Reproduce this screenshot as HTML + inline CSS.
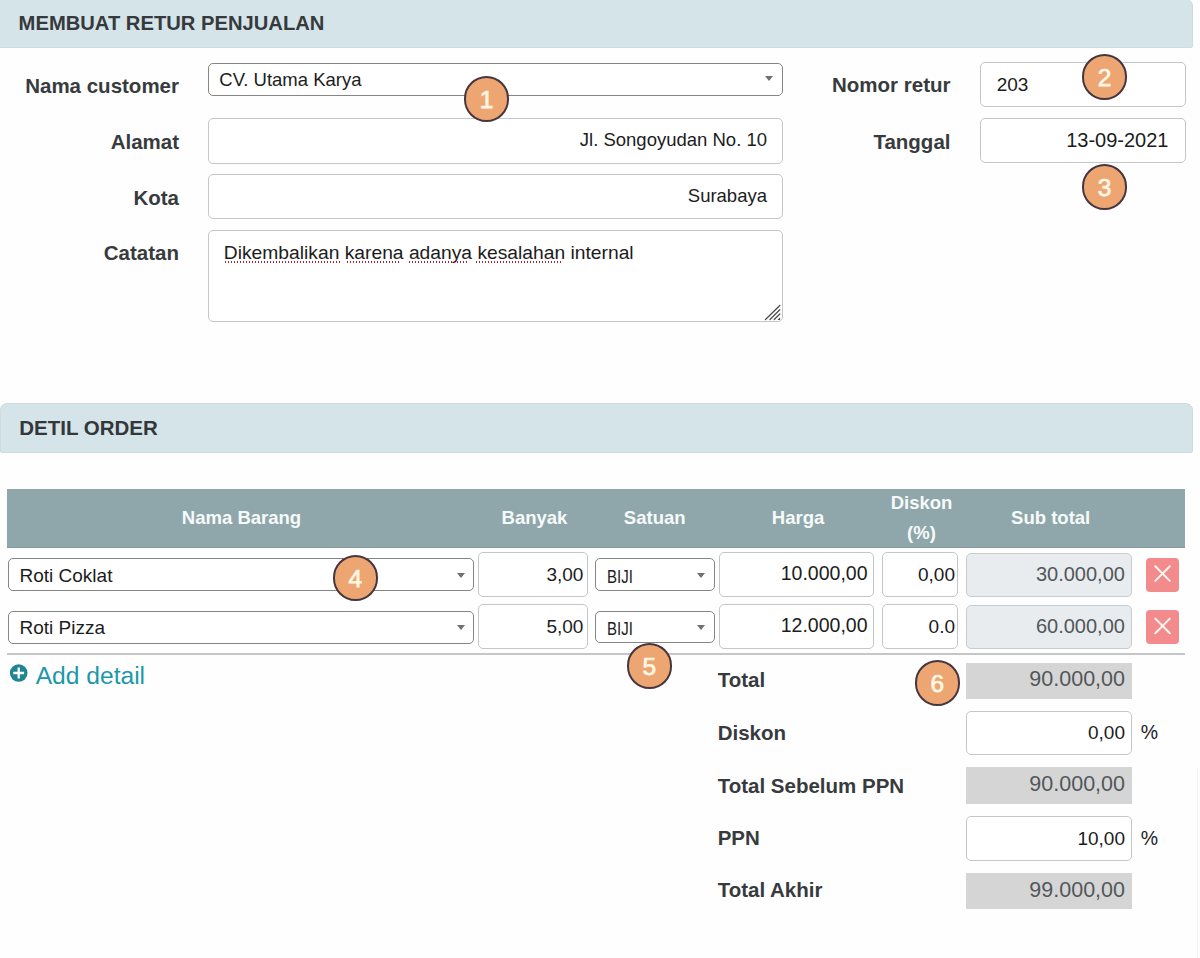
<!DOCTYPE html>
<html><head><meta charset="utf-8">
<style>
*{box-sizing:border-box;margin:0;padding:0}
html,body{width:1200px;height:958px;overflow:hidden;background:#fefefe;font-family:"Liberation Sans",sans-serif;color:#1c1c1c}
.a{position:absolute}
.t{position:absolute;white-space:nowrap;line-height:1}
.b{font-weight:bold}
.lb{position:absolute;white-space:nowrap;line-height:1;font-weight:bold;font-size:20.5px;color:#383b3d}
.inp{position:absolute;border:1px solid #c6c6c6;border-radius:5px;background:#fff}
.sel{position:absolute;border:1px solid #858585;border-radius:5px;background:#fff}
.ro{position:absolute;border:1px solid #c9cccf;border-radius:5px;background:#e9ecef}
.gr{position:absolute;background:#d5d5d5}
.arr{position:absolute;width:0;height:0;border-left:4.5px solid transparent;border-right:4.5px solid transparent;border-top:5.5px solid #707070}
.th{position:absolute;white-space:nowrap;line-height:1;font-weight:bold;font-size:18.5px;color:#f6fafa;text-align:center}
.v{position:absolute;white-space:nowrap;line-height:1;font-size:19px;color:#1c1c1c}
.vg{position:absolute;white-space:nowrap;line-height:1;font-size:20px;color:#51575a}
.xb{position:absolute;width:33px;height:33.5px;background:#f38a8b;border-radius:4px}
.badge{position:absolute;width:45.5px;height:45.5px;border-radius:50%;background:#eda671;border:2px solid #46363f}
.bn{position:absolute;white-space:nowrap;line-height:1;font-size:24.5px;font-weight:normal;-webkit-text-stroke:0.75px #fff6e4;color:#fff6e4;text-align:center;width:46px}
.sp{position:absolute;height:2px;background-image:radial-gradient(circle,#a8233a 0.9px,transparent 1.1px);background-size:3px 2px;background-repeat:repeat-x}
</style></head>
<body>
<!-- Section 1 header -->
<div class="a" style="left:-8px;top:-1px;width:1201px;height:48.7px;background:#d5e4e8;border:1px solid #cddbdf;border-radius:7px 7px 2px 2px"></div>
<div class="t b" style="left:18.6px;top:13px;font-size:20.2px;color:#363a3d">MEMBUAT RETUR PENJUALAN</div>

<!-- labels left -->
<div class="lb" style="right:1021px;top:75.6px">Nama customer</div>
<div class="lb" style="right:1021px;top:132px">Alamat</div>
<div class="lb" style="right:1021px;top:187.6px">Kota</div>
<div class="lb" style="right:1021px;top:243.4px">Catatan</div>
<div class="lb" style="right:249.5px;top:75.3px">Nomor retur</div>
<div class="lb" style="right:249.5px;top:131.8px">Tanggal</div>

<!-- inputs -->
<div class="sel" style="left:208px;top:63px;width:575px;height:33px;border-radius:5px"></div>
<div class="arr" style="left:765px;top:76px"></div>
<div class="t" style="left:219.3px;top:70.6px;font-size:18.5px">CV. Utama Karya</div>

<div class="inp" style="left:208px;top:118px;width:574.5px;height:45.5px"></div>
<div class="t" style="right:433px;top:131.3px;font-size:18.5px">Jl. Songoyudan No. 10</div>
<div class="inp" style="left:208px;top:174.3px;width:574.5px;height:44.7px"></div>
<div class="t" style="right:433px;top:187.3px;font-size:18.5px">Surabaya</div>
<div class="inp" style="left:208px;top:230px;width:574.5px;height:92px"></div>
<div class="t" style="left:223.8px;top:242.7px;font-size:19.25px">Dikembalikan karena adanya kesalahan internal</div>
<div class="sp" style="left:224px;top:261.3px;width:117px"></div>
<div class="sp" style="left:346px;top:261.3px;width:55px"></div>
<div class="sp" style="left:408px;top:261.3px;width:60px"></div>
<div class="sp" style="left:475px;top:261.3px;width:88px"></div>
<svg class="a" style="left:760px;top:300px" width="24" height="24" viewBox="0 0 24 24">
<g stroke="#4a4a4a" stroke-width="1.3" stroke-linecap="round">
<line x1="5.5" y1="19.5" x2="19.8" y2="5.5"/>
<line x1="10" y1="19.5" x2="19.8" y2="9.8"/>
<line x1="14.2" y1="19.5" x2="19.8" y2="14"/>
</g>
<path d="M17.4 19.9 L20.1 17.2 L20.1 19.9 Z" fill="#4a4a4a"/>
</svg>

<div class="inp" style="left:980px;top:62px;width:205.5px;height:44.5px"></div>
<div class="t" style="left:996.7px;top:74.7px;font-size:19px">203</div>
<div class="inp" style="left:980px;top:118.3px;width:205.5px;height:45px"></div>
<div class="t" style="right:31.5px;top:130.1px;font-size:20px">13-09-2021</div>

<!-- Section 2 header -->
<div class="a" style="left:0px;top:403.3px;width:1192.7px;height:50px;background:#d5e4e8;border:1px solid #cddbdf;border-radius:7px 7px 2px 2px"></div>
<div class="t b" style="left:19.2px;top:417.6px;font-size:20.5px;color:#33373a">DETIL ORDER</div>

<!-- table header -->
<div class="a" style="left:7px;top:488.8px;width:1178.4px;height:59px;background:#8fa7aa;border-bottom:1px solid #83999c"></div>
<div class="th" style="left:141.5px;top:508.8px;width:200px">Nama Barang</div>
<div class="th" style="left:434.5px;top:508.8px;width:200px">Banyak</div>
<div class="th" style="left:554.7px;top:508.8px;width:200px">Satuan</div>
<div class="th" style="left:698.1px;top:508.8px;width:200px">Harga</div>
<div class="th" style="left:821.5px;top:494.3px;width:200px">Diskon</div>
<div class="th" style="left:821.5px;top:523.6px;width:200px">(%)</div>
<div class="th" style="left:950.7px;top:509.3px;width:200px">Sub total</div>

<!-- row 1 -->
<div class="sel" style="left:8px;top:558px;width:466px;height:33px"></div>
<div class="arr" style="left:456.5px;top:572.5px"></div>
<div class="v" style="left:19.5px;top:566.4px">Roti Coklat</div>
<div class="inp" style="left:478.4px;top:552px;width:110px;height:45.3px"></div>
<div class="v" style="right:616.6px;top:564.6px">3,00</div>
<div class="sel" style="left:595px;top:558px;width:119.5px;height:33px"></div>
<div class="arr" style="left:697px;top:572.5px"></div>
<div class="v" style="left:607px;top:566.5px;transform:scaleX(0.79);transform-origin:0 0">BIJI</div>
<div class="inp" style="left:719.3px;top:552px;width:154.7px;height:45.3px"></div>
<div class="v" style="right:332.5px;top:564.3px;font-size:19.5px">10.000,00</div>
<div class="inp" style="left:882.3px;top:552px;width:76px;height:45.3px"></div>
<div class="v" style="right:245px;top:564.7px">0,00</div>
<div class="ro" style="left:965.5px;top:552.5px;width:166.7px;height:44.7px"></div>
<div class="vg" style="right:75.1px;top:563.9px">30.000,00</div>
<div class="xb" style="left:1145.7px;top:558px"></div>

<!-- row 2 -->
<div class="sel" style="left:8px;top:610.5px;width:466px;height:33px"></div>
<div class="arr" style="left:456.5px;top:625px"></div>
<div class="v" style="left:19.5px;top:618.4px">Roti Pizza</div>
<div class="inp" style="left:478.4px;top:604.3px;width:110px;height:45px"></div>
<div class="v" style="right:616.6px;top:616.6px">5,00</div>
<div class="sel" style="left:595px;top:610.5px;width:119.5px;height:32.7px"></div>
<div class="arr" style="left:697px;top:625px"></div>
<div class="v" style="left:607px;top:618.5px;transform:scaleX(0.79);transform-origin:0 0">BIJI</div>
<div class="inp" style="left:719.3px;top:604.3px;width:154.7px;height:45px"></div>
<div class="v" style="right:332.5px;top:616.3px;font-size:19.5px">12.000,00</div>
<div class="inp" style="left:882.3px;top:604.3px;width:76px;height:45px"></div>
<div class="v" style="right:245px;top:616.7px">0.0</div>
<div class="ro" style="left:965.5px;top:604.5px;width:166.7px;height:44.7px"></div>
<div class="vg" style="right:75.1px;top:615.9px">60.000,00</div>
<div class="xb" style="left:1145.7px;top:610.3px"></div>

<!-- X icons -->
<svg class="a" style="left:1145.7px;top:558px" width="33" height="86" viewBox="0 0 33 86">
<g stroke="#fff6f4" stroke-width="2" stroke-linecap="round">
<line x1="9.3" y1="8.3" x2="23.8" y2="22.9"/><line x1="23.8" y1="8.3" x2="9.3" y2="22.9"/>
<line x1="9.3" y1="60.6" x2="23.8" y2="75.2"/><line x1="23.8" y1="60.6" x2="9.3" y2="75.2"/>
</g></svg>

<div class="a" style="left:7px;top:652.8px;width:1178px;height:1.8px;background:#c4c6c7"></div>

<!-- add detail -->
<svg class="a" style="left:9px;top:663px" width="20" height="20" viewBox="0 0 20 20">
<circle cx="9.7" cy="10" r="8.8" fill="#1f8494"/>
<path d="M9.7 4.6 V15.4 M4.3 10 H15.1" stroke="#fff" stroke-width="2.3"/>
</svg>
<div class="t" style="left:35.7px;top:664.2px;font-size:24.6px;color:#1b98a7">Add detail</div>

<!-- totals -->
<div class="lb" style="left:717.7px;top:670.4px">Total</div>
<div class="lb" style="left:717.7px;top:722.8px">Diskon</div>
<div class="lb" style="left:717.7px;top:775.6px">Total Sebelum PPN</div>
<div class="lb" style="left:717.7px;top:828.3px">PPN</div>
<div class="lb" style="left:717.7px;top:880.4px">Total Akhir</div>

<div class="gr" style="left:966px;top:663px;width:166px;height:35.5px"></div>
<div class="vg" style="right:75px;top:669.1px;font-size:21.5px">90.000,00</div>
<div class="inp" style="left:966px;top:711px;width:166px;height:44.3px"></div>
<div class="v" style="right:75px;top:723.1px">0,00</div>
<div class="v" style="left:1140.7px;top:723.1px;font-size:19.5px">%</div>
<div class="gr" style="left:966px;top:767.3px;width:166px;height:36.3px"></div>
<div class="vg" style="right:75px;top:774.3px;font-size:21.5px">90.000,00</div>
<div class="inp" style="left:966px;top:816px;width:166px;height:45px"></div>
<div class="v" style="right:75px;top:829.2px">10,00</div>
<div class="v" style="left:1140.7px;top:829.2px;font-size:19.5px">%</div>
<div class="gr" style="left:966px;top:872.8px;width:166px;height:36px"></div>
<div class="vg" style="right:75px;top:879.8px;font-size:21.5px">99.000,00</div>

<div class="a" style="left:1197px;top:768px;width:1px;height:190px;background:#f3f3f3"></div>

<!-- badges -->
<div class="badge" style="left:463.7px;top:76.2px"></div><div class="bn" style="left:463.5px;top:87.7px">1</div>
<div class="badge" style="left:1081.7px;top:54.2px"></div><div class="bn" style="left:1081.5px;top:65.7px">2</div>
<div class="badge" style="left:1081.7px;top:164.2px"></div><div class="bn" style="left:1081.5px;top:175.7px">3</div>
<div class="badge" style="left:332.5px;top:555.4px"></div><div class="bn" style="left:332.3px;top:566.9px">4</div>
<div class="badge" style="left:626.6px;top:643.2px"></div><div class="bn" style="left:626.4px;top:654.7px">5</div>
<div class="badge" style="left:914.6px;top:660.4px"></div><div class="bn" style="left:914.4px;top:671.9px">6</div>
</body></html>
